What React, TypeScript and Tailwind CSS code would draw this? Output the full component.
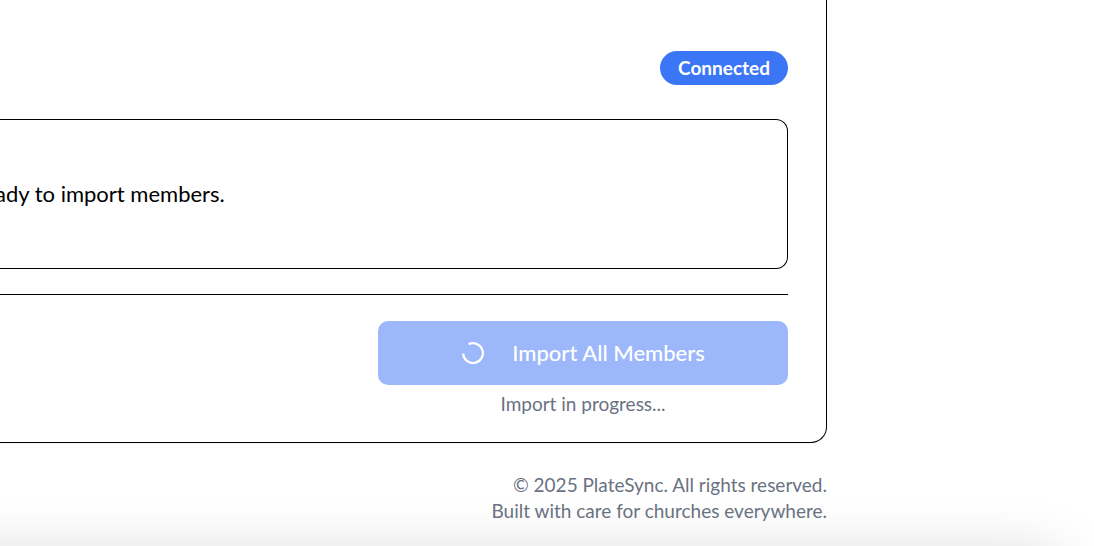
function Spinner() {
  return (
    <svg className="size-6 shrink-0" viewBox="0 0 24 24" fill="none" aria-hidden="true">
      <path
        d="M7.6 4.2A9.9 9.9 0 1 1 2.1 13.6"
        stroke="white"
        strokeWidth="2.2"
      />
    </svg>
  );
}

export default function App() {
  return (
    <div className="relative min-h-screen overflow-hidden bg-white pr-[267px] font-['Lato',sans-serif] text-black">
      <div
        aria-hidden="true"
        className="absolute top-full right-9 -left-24 h-40 shadow-[0_10px_60px_rgba(0,0,0,0.17)]"
      />
      <main className="relative rounded-br-2xl border-r border-b border-black bg-white pt-[51px] pr-[38px] pb-[25px] shadow-xs">
        <div className="flex justify-end">
          <span className="rounded-full bg-[#3b76f6] px-[18px] py-[3px] text-[19px] leading-7 font-bold text-white">
            Connected
          </span>
        </div>
        <section className="mt-[34px] -ml-[5px] rounded-r-xl border border-l-0 border-black py-[58px]">
          <p className="text-[22px] leading-8">ady to import members.</p>
        </section>
        <div className="mt-[25px] flex justify-end border-t border-black pt-[26px]">
          <div className="flex w-[410px] flex-col">
            <button
              type="button"
              disabled
              className="flex h-16 items-center justify-center gap-[27px] rounded-[10px] bg-[#9db8fa] pb-[2px] text-[22px] font-medium text-white"
            >
              <Spinner />
              Import All Members
            </button>
            <p className="mt-[5px] text-center text-[19px] leading-[27px] text-gray-500">
              Import in progress...
            </p>
          </div>
        </div>
      </main>
      <footer className="relative mt-[29px] text-right text-[19px] leading-[26px] text-gray-500">
        <p>© 2025 PlateSync. All rights reserved.</p>
        <p>Built with care for churches everywhere.</p>
      </footer>
    </div>
  );
}
